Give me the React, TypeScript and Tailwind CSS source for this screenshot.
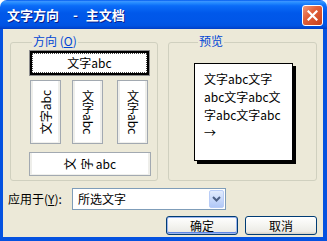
import React from 'react';

const font = "font-['Noto_Sans_CJK_SC','Liberation_Sans',sans-serif]";

const OptionButton: React.FC<{ className?: string; children: React.ReactNode }> = ({ className = '', children }) => (
  <div
    className={`flex items-center justify-center border border-[#A2A9B1] bg-white shadow-[inset_2px_0_0_#EEEEEA,inset_-2px_0_0_#EEEEEA,inset_0_-1px_0_#F0F0EC] ${className}`}
  >
    {children}
  </div>
);

const XpButton: React.FC<{ isDefault?: boolean; children: React.ReactNode }> = ({ isDefault, children }) => (
  <div
    className={`flex h-[19px] w-[72px] items-center justify-center rounded-[3px] border border-[#003C74] bg-[linear-gradient(to_bottom,#FFFFFF_0%,#F4F4F0_50%,#ECEBE6_85%,#D6D0C5_100%)] leading-[17px] text-black ${
      isDefault ? 'shadow-[inset_0_0_0_1px_#9DB6EE,inset_0_-1px_0_1px_#5E86E4]' : ''
    }`}
  >
    {children}
  </div>
);

export default function App() {
  return (
    <div className={`flex h-[241px] w-[327px] flex-col bg-white text-[12px] ${font}`}>
      {/* Title bar */}
      <div className="flex h-[29px] items-center justify-between rounded-t-[7px] bg-[linear-gradient(to_bottom,#0058EE_0%,#3A93FF_5%,#288EFF_9%,#0A6CF8_20%,#0058EA_45%,#0056E8_75%,#0053E2_88%,#0046D2_96%,#003DC4_100%)] pl-[7px] pr-[4px]">
        <div className="flex items-center text-[13px] font-bold leading-[16px] text-white [text-shadow:1px_1px_0_#0A1E8C]">
          <span>文字方向</span>
          <span className="ml-[14px] mr-[8px]">-</span>
          <span>主文档</span>
        </div>
        <div className="mt-[1px] flex h-[21px] w-[21px] items-center justify-center rounded-[3px] border border-white bg-[linear-gradient(135deg,#F09A7C_0%,#E2603A_40%,#C8401C_100%)]">
          <svg width="11" height="11" viewBox="0 0 11 11">
            <path d="M1.5 1.5 L9.5 9.5 M9.5 1.5 L1.5 9.5" stroke="#FFFFFF" strokeWidth="2.2" strokeLinecap="square" />
          </svg>
        </div>
      </div>

      {/* Body */}
      <div className="flex flex-1 flex-col border-b-[4px] border-l-[3px] border-r-[4px] border-[#0552E0] bg-[#ECE9D8]">
        <div className="flex pl-[7px] pt-[6px]">
          {/* Direction group */}
          <fieldset className="h-[146px] w-[148px] rounded-[3px] border border-[#D0D0BF] pl-[18px]">
            <legend className="ml-[3px] px-[1px] pb-[3px] leading-[12px] text-[#0046D5]">
              方向 (<span className="underline">O</span>)
            </legend>
            <div className="flex h-[26px] w-[121px] border border-[#8E8E8E] bg-white">
              <div className="flex flex-1 border-2 border-black">
                <div className="flex flex-1 items-center justify-center border border-dotted border-[#444]">
                  文字abc
                </div>
              </div>
            </div>
            <div className="mt-[4px] flex">
              <OptionButton className="ml-[1px] h-[64px] w-[31px]">
                <span className="rotate-180 [text-orientation:sideways] [writing-mode:vertical-rl]">文字abc</span>
              </OptionButton>
              <OptionButton className="ml-[11px] h-[64px] w-[31px]">
                <span className="[writing-mode:vertical-rl]">文字abc</span>
              </OptionButton>
              <OptionButton className="ml-[14px] h-[64px] w-[31px]">
                <span className="[writing-mode:vertical-rl]">文字abc</span>
              </OptionButton>
            </div>
            <OptionButton className="mt-[8px] h-[24px] w-[122px]">
              <span className="mr-[5px] inline-flex h-[12px] w-[12px] -rotate-90 items-center justify-center leading-[12px]">文</span>
              <span className="mr-[3px] inline-flex h-[12px] w-[12px] -rotate-90 items-center justify-center leading-[12px]">字</span>
              <span>abc</span>
            </OptionButton>
          </fieldset>

          {/* Preview group */}
          <fieldset className="ml-[10px] h-[146px] w-[149px] rounded-[3px] border border-[#D0D0BF] pl-[25px]">
            <legend className="ml-[4px] px-[1px] pb-[3px] leading-[12px] text-[#0046D5]">预览</legend>
            <div className="mt-[13px] h-[98px] w-[99px] border border-black bg-white pl-[9px] pt-[6px] leading-[18px] text-black shadow-[3px_3px_0_#000]">
              <div>文字abc文字</div>
              <div>abc文字abc文</div>
              <div>字abc文字abc</div>
              <div>→</div>
            </div>
          </fieldset>
        </div>

        {/* Apply to */}
        <div className="mt-[7px] flex items-center pl-[5px]">
          <span className="w-[64px] leading-[14px] text-black">
            应用于(<span className="underline">Y</span>):
          </span>
          <div className="flex h-[22px] w-[154px] items-center justify-between border border-[#7F9DB9] bg-white pl-[5px] pr-[1px]">
            <span className="text-black">所选文字</span>
            <div className="flex h-[18px] w-[15px] items-center justify-center rounded-[2px] border border-[#B9CDF7] bg-[linear-gradient(to_bottom,#E2ECFD_0%,#C4D6FA_60%,#B1C8F6_100%)]">
              <svg width="9" height="6" viewBox="0 0 9 6">
                <path d="M1 1 L4.5 4.5 L8 1" fill="none" stroke="#4D6185" strokeWidth="2" />
              </svg>
            </div>
          </div>
        </div>

        {/* Buttons */}
        <div className="mt-[6px] flex justify-end gap-[7px] pr-[6px]">
          <XpButton isDefault>确定</XpButton>
          <XpButton>取消</XpButton>
        </div>
      </div>
    </div>
  );
}
